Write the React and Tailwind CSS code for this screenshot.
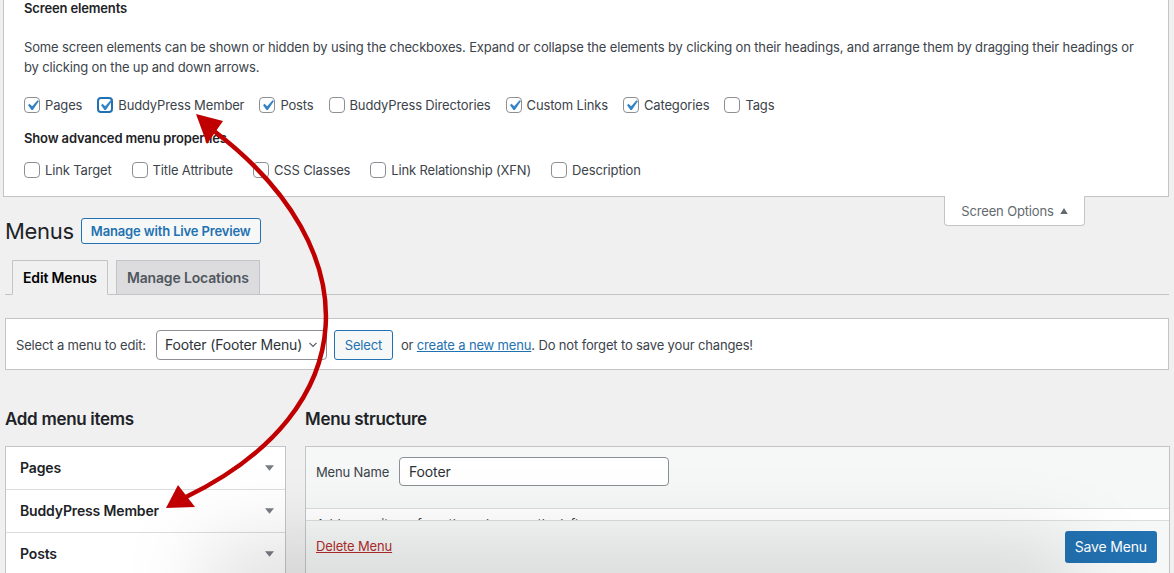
import React from 'react'

const check = 'M14.83 4.89l1.34.94-5.81 8.38H9.02L5.78 9.67l1.34-1.25 2.57 2.4z'

function Box({ checked, focus }) {
  return (
    <span
      className={
        'relative flex items-center justify-center w-4 h-4 rounded-[4px] bg-white shrink-0 ' +
        (focus ? 'border-2 border-[#2271b1]' : 'border border-[#8c8f94]')
      }
    >
      {checked && (
        <svg viewBox="0 0 20 20" className="absolute w-[21px] h-[21px] -left-[3px] -top-[3px]" style={focus ? { left: -4, top: -4 } : undefined}>
          <path d={check} fill="#3582c4" />
        </svg>
      )}
    </span>
  )
}

function Opt({ label, checked, focus, wide }) {
  return (
    <label className={'flex items-center gap-[5px] ' + (wide ? 'mr-[20px]' : 'mr-[15px]')}>
      <Box checked={checked} focus={focus} />
      <span>{label}</span>
    </label>
  )
}

function Caret() {
  return (
    <svg viewBox="0 0 10 6" className="w-[9px] h-[6px]">
      <path d="M0 0h10L5 6z" fill="#787c82" />
    </svg>
  )
}

export default function App() {
  const elems = [
    ['Pages', true],
    ['BuddyPress Member', true, true],
    ['Posts', true],
    ['BuddyPress Directories', false],
    ['Custom Links', true],
    ['Categories', true],
    ['Tags', false],
  ]
  const adv = ['Link Target', 'Title Attribute', 'CSS Classes', 'Link Relationship (XFN)', 'Description']

  return (
    <div className="relative h-[573px] overflow-hidden bg-[#f0f0f1] text-[13px] leading-5 tracking-[-0.15px] text-[#3c434a] [font-family:Inter,'Noto_Sans',sans-serif]">
      {/* screen options panel */}
      <div className="ml-[3px] mr-[5px] bg-white border border-t-0 border-[#c3c4c7] pl-[20px] pr-[30px] pb-[16px] -mt-[2px]">
        <div className="font-semibold text-[#1d2327]">Screen elements</div>
        <p className="mt-[19px]">
          Some screen elements can be shown or hidden by using the checkboxes. Expand or collapse the elements by clicking on their headings, and arrange them by dragging their headings or by clicking on the up and down arrows.
        </p>
        <div className="flex mt-[18px]">
          {elems.map(([l, c, f]) => (
            <Opt key={l} label={l} checked={c} focus={f} />
          ))}
        </div>
        <div className="mt-[13px] font-semibold text-[#1d2327]">Show advanced menu properties</div>
        <div className="flex mt-[12px]">
          {adv.map(l => (
            <Opt key={l} label={l} wide />
          ))}
        </div>
      </div>

      <div className="flex justify-end pr-[89px] h-0">
        <div className="shrink-0 w-[141px] h-[30px] bg-white border border-t-0 border-[#c3c4c7] rounded-b-[4px] flex items-center justify-center gap-[6px] text-[#646970] -mt-px pt-px">
          <span>Screen Options</span>
          <svg viewBox="0 0 10 8" className="w-[8px] h-[6px]">
            <path d="M0 8h10L5 0z" fill="#646970" />
          </svg>
        </div>
      </div>

      {/* heading */}
      <div className="flex items-center mt-[21px] pl-[5px] gap-[7px]">
        <h1 className="text-[22px] leading-[26px] font-normal tracking-[-0.3px] text-[#1d2327]">Menus</h1>
        <button className="h-[26px] px-[9px] border border-[#2271b1] rounded-[3px] bg-[#f6f7f7] text-[#2271b1] font-semibold">
          Manage with Live Preview
        </button>
      </div>

      {/* tabs */}
      <div className="mt-[16px] mx-[5px] border-b border-[#c3c4c7] pl-[7px] flex gap-[8px]">
        <div className="-mb-px h-[35px] px-[10px] flex items-center border border-[#c3c4c7] border-b-[#f0f0f1] bg-[#f0f0f1] text-[14px] font-semibold text-[#000]">
          Edit Menus
        </div>
        <div className="h-[34px] px-[10px] flex items-center border border-b-0 border-[#c3c4c7] bg-[#dcdcde] text-[14px] font-semibold text-[#50575e]">
          Manage Locations
        </div>
      </div>

      {/* select menu */}
      <div className="mt-[23px] mx-[5px] bg-white border border-[#c3c4c7] px-[10px] pt-[11px] pb-[9px] flex items-center">
        <span>Select a menu to edit:</span>
        <div className="ml-[10px] w-[171px] h-[30px] border border-[#8c8f94] rounded-[4px] flex items-center justify-between pl-[8px] pr-[6px] text-[14px] text-[#2c3338]">
          <span>Footer (Footer Menu)</span>
          <svg viewBox="0 0 20 20" className="w-[14px] h-[14px]">
            <path d="M5 7l5 5 5-5" fill="none" stroke="#50575e" strokeWidth="1.6" />
          </svg>
        </div>
        <button className="ml-[7px] h-[30px] w-[59px] border border-[#2271b1] rounded-[3px] bg-[#f6f7f7] text-[#2271b1]">
          Select
        </button>
        <span className="ml-[8px]">
          or <span className="text-[#2271b1] underline">create a new menu</span>. Do not forget to save your changes!
        </span>
      </div>

      {/* columns */}
      <div className="flex mt-[37px] px-[5px] gap-[19px]">
        <div className="w-[281px] shrink-0">
          <h2 className="text-[17px] leading-6 font-semibold tracking-[-0.3px] text-[#1d2327]">Add menu items</h2>
          <div className="mt-[15px] bg-white border border-[#c3c4c7]">
            {['Pages', 'BuddyPress Member', 'Posts'].map(t => (
              <div key={t} className="h-[43px] border-b border-[#dcdcde] flex items-center justify-between pl-[14px] pr-[11px] pb-px text-[14px] font-semibold text-[#1d2327]">
                <span>{t}</span>
                <Caret />
              </div>
            ))}
          </div>
        </div>
        <div className="flex-1 mr-[-1px]">
          <h2 className="text-[17px] leading-6 font-semibold tracking-[-0.3px] text-[#1d2327]">Menu structure</h2>
          <div className="mt-[15px] border border-[#c3c4c7] bg-white">
            <div className="bg-[#f6f7f7] border-b border-[#dcdcde] pl-[10px] pt-[10px] pb-[22px] flex items-center gap-[10px]">
              <span>Menu Name</span>
              <div className="w-[270px] h-[29px] border border-[#8c8f94] rounded-[4px] bg-white flex items-center pl-[9px] text-[14px] text-[#2c3338]">
                Footer
              </div>
            </div>
            <div className="h-[11px] overflow-hidden pl-[10px] pt-[5px]">
              <p>Add menu items from the column on the left.</p>
            </div>
            <div className="bg-[#f6f7f7] border-t border-[#dcdcde] pl-[10px] pr-[12px] pt-[10px] pb-[20px] flex items-center justify-between">
              <span className="text-[#b32d2e] underline -mt-[3px]">Delete Menu</span>
              <button className="h-[32px] px-[10px] rounded-[3px] bg-[#2271b1] text-white text-[14px] font-normal">
                Save Menu
              </button>
            </div>
          </div>
        </div>
      </div>

      {/* soft shadow at the bottom */}
      <div className="pointer-events-none absolute left-[200px] bottom-[-45px] w-[880px] h-[70px] rounded-full bg-black/15 blur-2xl" />

      {/* annotation arrow */}
      <svg className="pointer-events-none absolute inset-0" width="1174" height="573" viewBox="0 0 1174 573">
        <path d="M214 131 C370 250 365 410 186 497" fill="none" stroke="#c00000" strokeWidth="4.5" />
        <polygon points="196,114 223,121 207,144" fill="#c00000" />
        <polygon points="166,508 178,485 195,507" fill="#c00000" />
      </svg>
    </div>
  )
}
